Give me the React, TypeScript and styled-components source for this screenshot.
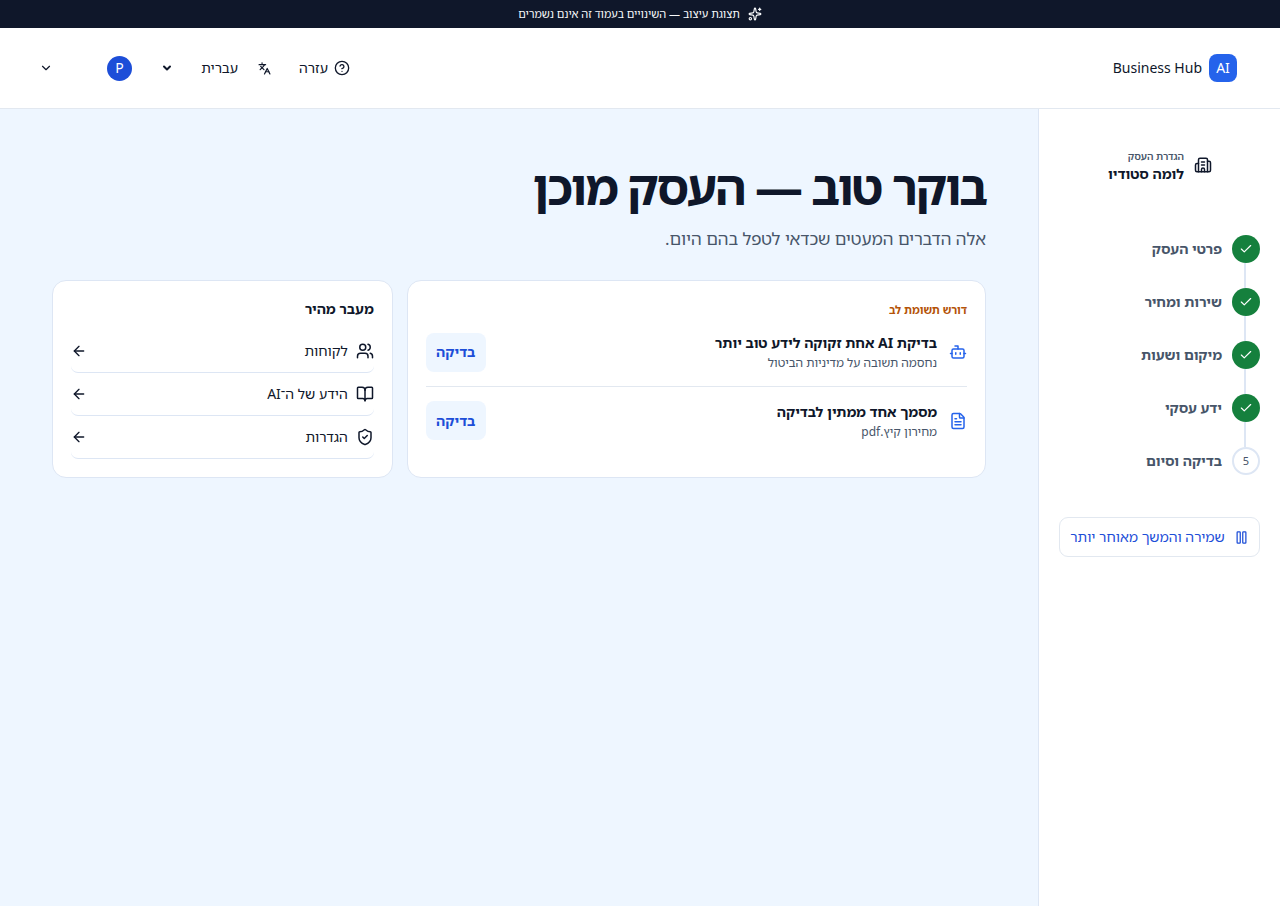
import React from "react";
import styled, { createGlobalStyle, css } from "styled-components";
import {
  ArrowLeft,
  BookOpen,
  Bot,
  Building2,
  Check,
  ChevronDown,
  CircleQuestionMark,
  FileText,
  Languages,
  Pause,
  ShieldCheck,
  Sparkles,
  Users,
} from "lucide-react";
import type { LucideIcon } from "lucide-react";

const color = {
  ink: "#0f172a",
  muted: "#475569",
  line: "#dde6f4",
  rule: "#e2e8f0",
  blue: "#1d4ed8",
  brand: "#2563eb",
  tint: "#eef6ff",
  green: "#15803d",
  amber: "#b45309",
};

const GlobalStyle = createGlobalStyle`
  *, *::before, *::after { box-sizing: border-box; }
  body {
    margin: 0;
    background: ${color.tint};
    color: ${color.ink};
    font-family: "Noto Sans", "Noto Sans Hebrew", sans-serif;
    font-size: 14px;
    line-height: 20px;
  }
  button, select { font: inherit; color: inherit; }
  a { color: inherit; text-decoration: none; }
  h1, h2, p, ol, ul { margin: 0; padding: 0; }
  ol, ul { list-style: none; }
  svg { flex: none; display: block; }
`;

const Page = styled.div`
  min-height: 100vh;
  display: flex;
  flex-direction: column;
`;

const Notice = styled.div`
  display: flex;
  align-items: center;
  justify-content: center;
  gap: 8px;
  height: 28px;
  background: ${color.ink};
  color: #f8fafc;
  font-size: 11px;
`;

const Header = styled.header`
  display: flex;
  align-items: center;
  justify-content: space-between;
  height: 81px;
  padding: 0 43px 0 39px;
  background: #fff;
  border-bottom: 1px solid ${color.rule};
`;

const Brand = styled.a`
  display: flex;
  align-items: center;
  gap: 7px;
`;

const BrandMark = styled.span`
  display: grid;
  place-items: center;
  width: 28px;
  height: 28px;
  border-radius: 8px;
  background: ${color.brand};
  color: #fff;
`;

const Tools = styled.div`
  display: flex;
  align-items: center;
`;

const PlainButton = styled.button`
  display: flex;
  align-items: center;
  gap: 6px;
  padding: 0;
  border: 0;
  background: none;
  cursor: pointer;
`;

const LanguagePicker = styled.label`
  display: flex;
  align-items: center;
  gap: 20px;
  margin: 0 28px 0 29px;
`;

const SelectWrap = styled.span`
  display: grid;
  align-items: center;
  width: 77px;
  > * { grid-area: 1 / 1; }
  > svg { justify-self: end; pointer-events: none; }
`;

const Select = styled.select`
  appearance: none;
  width: 100%;
  height: 28px;
  padding: 0;
  border: 0;
  background: none;
`;

const AccountButton = styled(PlainButton)`
  gap: 54px;
`;

const Avatar = styled.span`
  display: grid;
  place-items: center;
  width: 25px;
  height: 25px;
  border-radius: 50%;
  background: ${color.blue};
  color: #fff;
`;

const Body = styled.div`
  flex: 1;
  display: flex;
`;

const Sidebar = styled.aside`
  flex: none;
  width: 242px;
  padding: 38px 20px;
  background: #fff;
  border-left: 1px solid ${color.line};
`;

const Business = styled.div`
  display: flex;
  align-items: center;
  gap: 10px;
  padding-right: 48px;
`;

const BusinessText = styled.div`
  line-height: 18px;
`;

const Eyebrow = styled.p`
  color: ${color.muted};
  font-size: 10px;
  font-weight: 600;
`;

const BusinessName = styled.p`
  font-weight: 700;
`;

const Steps = styled.ol`
  margin-top: 52px;
`;

const Step = styled.li`
  position: relative;
  display: flex;
  align-items: center;
  gap: 10px;
  height: 28px;
  color: ${color.muted};
  font-weight: 700;

  & + & { margin-top: 25px; }

  & + &::before {
    content: "";
    position: absolute;
    right: 14px;
    bottom: 100%;
    width: 2px;
    height: 25px;
    background: ${color.line};
  }
`;

const StepDot = styled.span<{ $done: boolean }>`
  display: grid;
  place-items: center;
  width: 28px;
  height: 28px;
  border-radius: 50%;
  font-size: 11px;
  font-weight: 400;
  ${({ $done }) =>
    $done
      ? css`background: ${color.green}; color: #fff;`
      : css`background: #fff; border: 2px solid ${color.line};`}
`;

const SaveButton = styled.button`
  display: flex;
  align-items: center;
  justify-content: center;
  gap: 9px;
  width: 100%;
  height: 40px;
  margin-top: 42px;
  padding: 0;
  border: 1px solid ${color.rule};
  border-radius: 9px;
  background: #fff;
  color: ${color.blue};
  cursor: pointer;
`;

const Main = styled.main`
  flex: 1;
  min-width: 0;
  padding: 50px 52px;
`;

const Title = styled.h1`
  font-size: 48px;
  line-height: 56px;
  font-weight: 700;
  letter-spacing: -2px;
`;

const Lead = styled.p`
  margin-top: 12px;
  color: ${color.muted};
  font-size: 17px;
  line-height: 24px;
`;

const Cards = styled.div`
  display: grid;
  grid-template-columns: 17fr 10fr;
  gap: 14px;
  margin-top: 29px;
`;

const Card = styled.section`
  padding: 18px;
  background: #fff;
  border: 1px solid ${color.line};
  border-radius: 14px;
`;

const AttentionTitle = styled.h2`
  height: 19px;
  color: ${color.amber};
  font-size: 11px;
  line-height: 22px;
  font-weight: 700;
`;

const Task = styled.li`
  display: flex;
  align-items: center;
  gap: 12px;
  height: 68px;

  & + & { border-top: 1px solid ${color.rule}; }
  > svg { color: ${color.brand}; }
`;

const TaskText = styled.div`
  flex: 1;
  padding-top: 2px;
`;

const TaskTitle = styled.p`
  font-weight: 700;
`;

const TaskNote = styled.p`
  color: ${color.muted};
  font-size: 12px;
`;

const ReviewButton = styled.button`
  width: 60px;
  height: 39px;
  padding: 0;
  border: 0;
  border-radius: 8px;
  background: ${color.tint};
  color: ${color.blue};
  font-weight: 700;
  cursor: pointer;
`;

const QuickTitle = styled.h2`
  margin-bottom: 11px;
  font-size: 14px;
  line-height: 20px;
`;

const QuickLink = styled.a`
  display: flex;
  align-items: center;
  gap: 8px;
  height: 43px;
  border-bottom: 1px solid ${color.line};
  border-radius: 7px;

  > :last-child { margin-right: auto; }
`;

const steps = ["פרטי העסק", "שירות ומחיר", "מיקום ושעות", "ידע עסקי", "בדיקה וסיום"];
const finishedSteps = 4;

const tasks: { icon: LucideIcon; title: string; note: string }[] = [
  { icon: Bot, title: "בדיקת AI אחת זקוקה לידע טוב יותר", note: "נחסמה תשובה על מדיניות הביטול" },
  { icon: FileText, title: "מסמך אחד ממתין לבדיקה", note: "מחירון קיץ.pdf" },
];

const quickLinks: { icon: LucideIcon; label: string }[] = [
  { icon: Users, label: "לקוחות" },
  { icon: BookOpen, label: "הידע של ה־AI" },
  { icon: ShieldCheck, label: "הגדרות" },
];

export default function App() {
  return (
    <Page dir="rtl" lang="he">
      <GlobalStyle />
      <Notice>
        <Sparkles size={14} />
        <span>תצוגת עיצוב — השינויים בעמוד זה אינם נשמרים</span>
      </Notice>
      <Header>
        <Brand href="#">
          <BrandMark>AI</BrandMark>
          <span>Business Hub</span>
        </Brand>
        <Tools>
          <PlainButton type="button">
            <CircleQuestionMark size={16} />
            עזרה
          </PlainButton>
          <LanguagePicker>
            <Languages size={13} strokeWidth={2.25} />
            <SelectWrap>
              <Select aria-label="שפה" defaultValue="he">
                <option value="he">עברית</option>
              </Select>
              <ChevronDown size={12} strokeWidth={4} />
            </SelectWrap>
          </LanguagePicker>
          <AccountButton type="button" aria-label="P">
            <Avatar>P</Avatar>
            <ChevronDown size={14} />
          </AccountButton>
        </Tools>
      </Header>
      <Body>
        <Sidebar>
          <Business>
            <Building2 size={18} />
            <BusinessText>
              <Eyebrow>הגדרת העסק</Eyebrow>
              <BusinessName>לומה סטודיו</BusinessName>
            </BusinessText>
          </Business>
          <Steps>
            {steps.map((label, i) => (
              <Step key={label}>
                <StepDot $done={i < finishedSteps}>
                  {i < finishedSteps ? <Check size={14} /> : i + 1}
                </StepDot>
                {label}
              </Step>
            ))}
          </Steps>
          <SaveButton type="button">
            <Pause size={15} />
            שמירה והמשך מאוחר יותר
          </SaveButton>
        </Sidebar>
        <Main>
          <Title>בוקר טוב — העסק מוכן</Title>
          <Lead>אלה הדברים המעטים שכדאי לטפל בהם היום.</Lead>
          <Cards>
            <Card>
              <AttentionTitle>דורש תשומת לב</AttentionTitle>
              <ul>
                {tasks.map(({ icon: Icon, title, note }) => (
                  <Task key={title}>
                    <Icon size={18} />
                    <TaskText>
                      <TaskTitle>{title}</TaskTitle>
                      <TaskNote>{note}</TaskNote>
                    </TaskText>
                    <ReviewButton type="button">בדיקה</ReviewButton>
                  </Task>
                ))}
              </ul>
            </Card>
            <Card>
              <QuickTitle>מעבר מהיר</QuickTitle>
              <nav>
                {quickLinks.map(({ icon: Icon, label }) => (
                  <QuickLink href="#" key={label}>
                    <Icon size={18} />
                    <span>{label}</span>
                    <ArrowLeft size={16} />
                  </QuickLink>
                ))}
              </nav>
            </Card>
          </Cards>
        </Main>
      </Body>
    </Page>
  );
}
